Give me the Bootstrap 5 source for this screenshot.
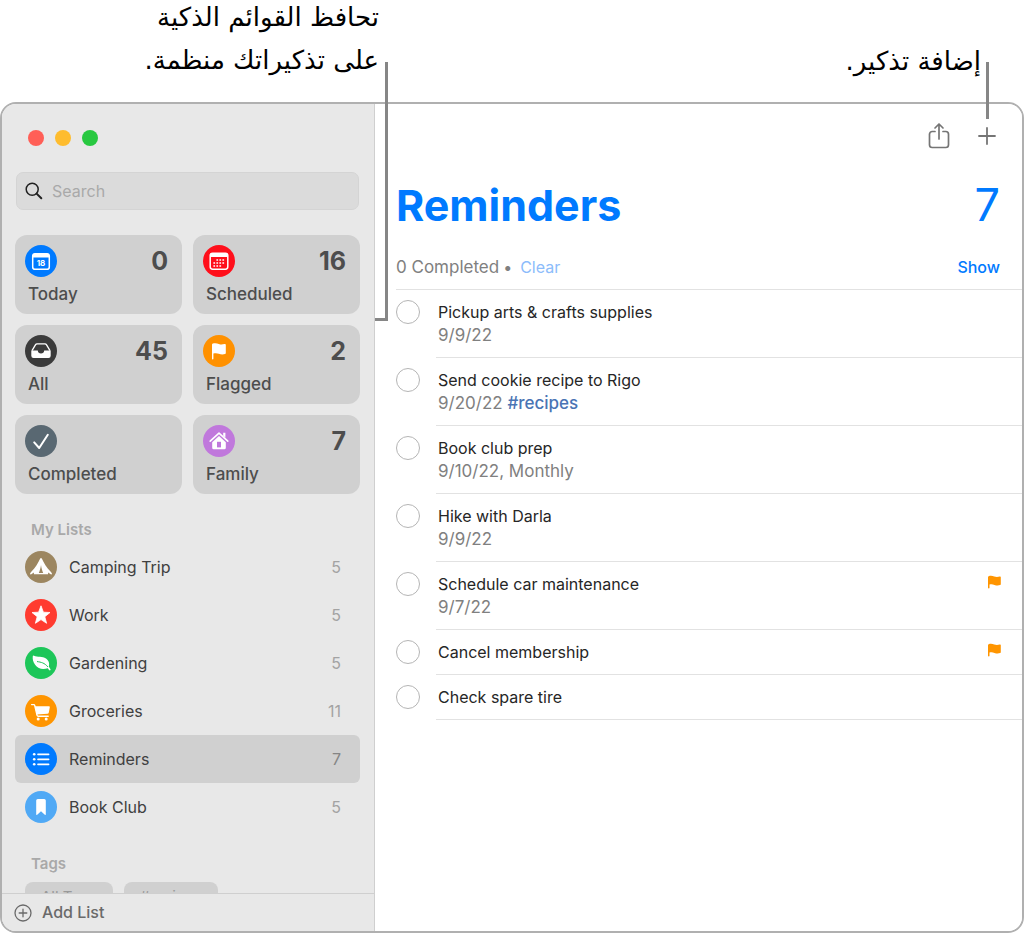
<!DOCTYPE html>
<html lang="en">
<head>
<meta charset="utf-8">
<meta name="viewport" content="width=device-width, initial-scale=1">
<title>Reminders</title>
<link href="https://cdn.jsdelivr.net/npm/bootstrap@5.3.0/dist/css/bootstrap.min.css" rel="stylesheet">
<style>
  body { font-family: Inter, "Liberation Sans", sans-serif; font-size: 16px; line-height: 23px; color: #262626; background: #fff; }
  a { text-decoration: none; }
  .callouts { height: 102px; z-index: 2; padding-right: 46px; font-family: "DejaVu Sans", sans-serif; font-size: 26px; line-height: 43px; color: #000; }
  .callout-note { width: 379px; }
  .callout-note > div { margin-top: -4px; }
  .callout-line { position: absolute; left: 100%; top: 62px; margin-left: 5px; width: 3px; height: 57px; background: #868686; }
  .callout-bracket { height: 259px; width: 13px; margin-left: -4px; background: none; border: solid #868686; border-width: 0 3px 3px 0; }

  .app-window { border: 2px solid #b0b0b0; border-radius: 16px; margin: 0 3px 1px 0; min-height: 0; }
  .sidebar { width: 373px; background: #e8e8e8; border-right: 1px solid #cfcfcf; padding: 0 14px 0 13px; }
  .traffic { padding: 26px 0 0 13px; gap: 11px; }
  .light { width: 16px; height: 16px; border-radius: 50%; border: 0; padding: 0; }
  .search-box { margin-top: 26px; margin-left: 1px; margin-right: 1px; height: 38px; border-radius: 7px; background: #dbdbdb; border: 1px solid #d4d4d4; padding: 0 8px; gap: 9px; }
  .search-box input { background: transparent; border: 0; outline: 0; padding: 0; color: #333; }
  .search-box input::placeholder { color: #a9a9a9; opacity: 1; }
  .tiles { display: grid; grid-template-columns: 1fr 1fr; gap: 11px; margin-top: 25px; }
  .tile { height: 79px; border: 0; border-radius: 12px; background: #d0d0d0; padding: 10px 14px 8px 10px; color: #4d4d4d; text-align: left; }
  .tile-label { font-size: 17px; font-weight: 500; padding-left: 3px; }
  .tile-count { font-size: 25px; font-weight: 700; line-height: 32px; }
  .disc { width: 32px; height: 32px; flex: none; display: block; }
  .group-title { font-size: 15px; line-height: 23px; font-weight: 600; color: #a9a9a9; margin: 0; padding-left: 16px; }
  .list-link { height: 48px; padding: 0 19px 0 10px; gap: 12px; border-radius: 6px; color: #404040; }
  .list-link .amount { color: #a3a3a3; }
  .list-link.current { background: #d0d0d0; }
  .list-link.current .amount { color: #858585; }
  .chip { border: 0; border-radius: 8px; background: #d0d0d0; color: #999; height: 30px; padding: 0 16px; font-size: 15px; line-height: 30px; }
  .side-foot { margin: 0 -14px 0 -13px; border-top: 1px solid #cfcfcf; height: 38px; background: #e8e8e8; }
  .add-list { border: 0; background: transparent; color: #6a6a6a; font-weight: 500; gap: 10px; padding: 0 12px; }

  .pane { background: #fff; padding-left: 21px; }
  .toolbar { height: 64px; padding-right: 26px; gap: 28px; }
  .tool { border: 0; background: transparent; padding: 0; line-height: 0; }
  .pane-title { font-size: 43px; line-height: 52px; font-weight: 700; color: #007aff; margin: 0; }
  .pane-total { font-size: 45px; line-height: 52px; color: #007aff; }
  .pane-head { padding: 11px 22px 0 0; }
  .status { padding: 25px 22px 10px 0; border-bottom: 1px solid #e2e2e2; color: #808080; }
  .done-count { font-size: 17px; }
  .clear-link { color: #8cbcfb; }
  .show-link { color: #007aff; font-weight: 500; }
  .todo { gap: 16px; }
  .todo .form-check-input { width: 24px; height: 24px; margin: 10px 0 0 0; border: 1px solid #b5b5b5; border-radius: 50%; flex: none; background-color: #fff; }
  .todo-body { border-bottom: 1px solid #e2e2e2; padding: 11px 21px 10px 2px; }
  .todo-when { font-size: 17px; color: #808080; }
  .tag-link { color: #4a74b4; font-weight: 500; }
</style>
</head>
<body>
<div class="d-flex flex-column vh-100">
  <header class="callouts position-relative d-flex justify-content-between flex-shrink-0" lang="ar">
    <div class="callout-note position-relative">
      <div dir="rtl">تحافظ القوائم الذكية<br>على تذكيراتك منظمة.</div>
      <span class="callout-line callout-bracket"></span>
    </div>
    <div class="position-relative align-self-start pt-4">
      <div dir="rtl" class="pt-3">إضافة تذكير.</div>
      <span class="callout-line"></span>
    </div>
  </header>

  <div class="app-window d-flex flex-grow-1 overflow-hidden">
    <aside class="sidebar d-flex flex-column flex-shrink-0">
      <div class="traffic d-flex">
        <button class="light" style="background:#ff5f57" aria-label="Close"></button>
        <button class="light" style="background:#febc2e" aria-label="Minimize"></button>
        <button class="light" style="background:#28c840" aria-label="Zoom"></button>
      </div>
      <label class="search-box d-flex align-items-center flex-shrink-0">
        <svg width="18" height="18" viewBox="0 0 18 18" fill="none" stroke="#222" stroke-width="1.5"><circle cx="7.200" cy="7.200" r="6"/><path d="M11.600 11.600l4.700 4.700" stroke-width="2" stroke-linecap="round"/></svg>
        <input type="text" class="flex-grow-1" placeholder="Search" aria-label="Search">
      </label>

      <div class="flex-grow-1 overflow-hidden" style="min-height:0">
        <div class="tiles">
          <button class="tile d-flex flex-column justify-content-between">
            <span class="d-flex justify-content-between w-100">
              <svg class="disc" viewBox="0 0 32 32"><circle cx="16" cy="16" r="16" fill="#007aff"/><rect x="7.7" y="8.7" width="16.6" height="15.6" rx="2.4" fill="none" stroke="#fff" stroke-width="1.5"/><path d="M7.7 12.6V10.6a2 2 0 0 1 2-2h12.6a2 2 0 0 1 2 2v2z" fill="#fff"/><text x="16" y="20.6" font-size="8" font-weight="700" fill="#fff" text-anchor="middle">18</text></svg>
              <span class="tile-count">0</span></span>
            <span class="tile-label">Today</span>
          </button>
          <button class="tile d-flex flex-column justify-content-between">
            <span class="d-flex justify-content-between w-100">
              <svg class="disc" viewBox="0 0 32 32"><circle cx="16" cy="16" r="16" fill="#ff0f1b"/><rect x="7.2" y="8.2" width="17.6" height="16" rx="2.4" fill="none" stroke="#fff" stroke-width="1.5"/><path d="M7.2 12V10.2a2 2 0 0 1 2-2h13.6a2 2 0 0 1 2 2V12z" fill="#fff"/><path d="M13.4 15h9M10.4 18h12M10.4 21h9" stroke="#fff" stroke-width="1.7" stroke-dasharray="1.7 1.3" fill="none"/></svg>
              <span class="tile-count">16</span></span>
            <span class="tile-label">Scheduled</span>
          </button>
          <button class="tile d-flex flex-column justify-content-between">
            <span class="d-flex justify-content-between w-100">
              <svg class="disc" viewBox="0 0 32 32"><circle cx="16" cy="16" r="16" fill="#3b3b3b"/><path d="M7 15.6L10.6 9.6a1.6 1.6 0 0 1 1.4-.8h8a1.6 1.6 0 0 1 1.4.8L25 15.6" fill="none" stroke="#fff" stroke-width="1.3"/><path d="M6.3 15.4h6.5c0 2 1.4 3 3.2 3s3.2-1 3.2-3h6.5v5.400a2.200 2.200 0 0 1-2.200 2.200h-15a2.200 2.200 0 0 1-2.200-2.200z" fill="#fff"/></svg>
              <span class="tile-count">45</span></span>
            <span class="tile-label">All</span>
          </button>
          <button class="tile d-flex flex-column justify-content-between">
            <span class="d-flex justify-content-between w-100">
              <svg class="disc" viewBox="0 0 32 32"><circle cx="16" cy="16" r="16" fill="#ff9100"/><path d="M9 9.700q0-.8.8-1.100c2.200-.8 4.200-.4 6 .3 2 .8 3.800.6 5.600.1q1.400-.3 1.400.8v8.200q0 .8-.8 1.100c-2.200.8-4.400.4-6.200-.3-1.800-.7-3.600-.7-5.400-.2v5.200q0 .7-.7.700t-.7-.7z" fill="#fff"/></svg>
              <span class="tile-count">2</span></span>
            <span class="tile-label">Flagged</span>
          </button>
          <button class="tile d-flex flex-column justify-content-between">
            <span class="d-flex justify-content-between w-100">
              <svg class="disc" viewBox="0 0 32 32"><circle cx="16" cy="16" r="16" fill="#596872"/><path d="M9.200 17.400l5 5.600L22.800 9.800" fill="none" stroke="#fff" stroke-width="2" stroke-linecap="round" stroke-linejoin="round"/></svg>
              <span class="tile-count"></span></span>
            <span class="tile-label">Completed</span>
          </button>
          <button class="tile d-flex flex-column justify-content-between">
            <span class="d-flex justify-content-between w-100">
              <svg class="disc" viewBox="0 0 32 32"><circle cx="16" cy="16" r="16" fill="#c078dc"/><path d="M7.200 16.200L16 8.200l8.800 8" fill="none" stroke="#fff" stroke-width="1.600" stroke-linecap="round" stroke-linejoin="round"/><path d="M20.200 7.800h2.200v5l-2.200-2z" fill="#fff"/><path d="M9.200 17.200L16 11l6.800 6.200v5.500a1.500 1.500 0 0 1-1.500 1.500H10.700a1.500 1.500 0 0 1-1.500-1.500z" fill="#fff"/><path d="M14 16.800h4v5.600h-4z" fill="#c078dc"/></svg>
              <span class="tile-count">7</span></span>
            <span class="tile-label">Family</span>
          </button>
        </div>

        <h2 class="group-title mt-4">My Lists</h2>
        <nav class="d-flex flex-column" style="margin-top:2px">
          <a href="#" class="list-link d-flex align-items-center">
            <svg class="disc" viewBox="0 0 32 32"><circle cx="16" cy="16" r="16" fill="#9c8660"/><path d="M15.200 7.600q.8-1.100 1.600 0c2 4.200 4.800 9.200 8.700 13l1.400 1.600q.2 1.200-.8 1.200l-3-1.800v1.600H8.900v-1.600l-3 1.800q-1 0-.8-1.200l1.400-1.600c3.900-3.800 6.700-8.800 8.700-13z" fill="#fff"/><path d="M16 14c-.4 3-1.200 5.600-2.200 8h4.400c-1-2.400-1.800-5-2.200-8z" fill="#9c8660"/></svg>
            <span class="flex-grow-1">Camping Trip</span><span class="amount">5</span></a>
          <a href="#" class="list-link d-flex align-items-center">
            <svg class="disc" viewBox="0 0 32 32"><circle cx="16" cy="16" r="16" fill="#ff3b30"/><path d="M16 6.800l2.400 6.400 6.600.3-5.200 4.200 1.800 6.600L16 20.600l-5.600 3.700 1.800-6.600L7 13.500l6.600-.3z" fill="#fff" stroke="#fff" stroke-width=".8" stroke-linejoin="round"/></svg>
            <span class="flex-grow-1">Work</span><span class="amount">5</span></a>
          <a href="#" class="list-link d-flex align-items-center">
            <svg class="disc" viewBox="0 0 32 32"><circle cx="16" cy="16" r="16" fill="#1dc659"/><path d="M7.800 9q.3-.8 1.200-.2c3.400 1.800 8.400.2 12 2.800 3.300 2.400 3.600 5.600 2.800 8l1.700 2.600q.4 1.100-.6 1.300-.6 0-2.200-2.200c-4.600 1.600-9.600.8-12.400-3.200C8 15 7.400 12 7.800 9z" fill="#fff"/><path d="M12.400 14.600c3.600.6 7.200 1.200 10.200 5" fill="none" stroke="#1dc659" stroke-width="1" stroke-linecap="round"/></svg>
            <span class="flex-grow-1">Gardening</span><span class="amount">5</span></a>
          <a href="#" class="list-link d-flex align-items-center">
            <svg class="disc" viewBox="0 0 32 32"><circle cx="16" cy="16" r="16" fill="#ff9500"/><path d="M6.600 9.600h2.200q.7 0 .9.800l2.300 9.700q.3 1.200 1.400 1.200h9.800" fill="none" stroke="#fff" stroke-width="1.400" stroke-linecap="round" stroke-linejoin="round"/><path d="M9.800 11.200h14.200q1 0 .8 1l-1 5.200q-.2 1.200-1.400 1.300l-10.600.8z" fill="#fff"/><circle cx="13.200" cy="24" r="1.500" fill="#fff"/><circle cx="21.200" cy="24" r="1.500" fill="#fff"/></svg>
            <span class="flex-grow-1">Groceries</span><span class="amount">11</span></a>
          <a href="#" class="list-link current d-flex align-items-center" aria-current="page">
            <svg class="disc" viewBox="0 0 32 32"><circle cx="16" cy="16" r="16" fill="#007aff"/><g fill="#fff"><circle cx="9.200" cy="11.300" r="1.300"/><circle cx="9.200" cy="16.300" r="1.300"/><circle cx="9.200" cy="21.300" r="1.300"/></g><path d="M13 11.300h10.600M13 16.300h10.600M13 21.300h10.600" stroke="#fff" stroke-width="1.700" stroke-linecap="round"/></svg>
            <span class="flex-grow-1">Reminders</span><span class="amount">7</span></a>
          <a href="#" class="list-link d-flex align-items-center">
            <svg class="disc" viewBox="0 0 32 32"><circle cx="16" cy="16" r="16" fill="#50a9f5"/><path d="M11.200 9.600q0-1.600 1.600-1.600h6.400q1.600 0 1.600 1.600v13.600q0 1.200-1 .6L16 20.200l-3.800 3.600q-1 .6-1-.6z" fill="#fff"/></svg>
            <span class="flex-grow-1">Book Club</span><span class="amount">5</span></a>
        </nav>

        <h2 class="group-title" style="margin-top:21px">Tags</h2>
        <div class="d-flex" style="gap:11px; padding:7px 10px 0">
          <button class="chip">All Tags</button>
          <button class="chip">#recipes</button>
        </div>
      </div>

      <div class="side-foot d-flex flex-shrink-0">
        <button class="add-list d-flex align-items-center">
          <svg width="18" height="18" viewBox="0 0 18 18" fill="none" stroke="#6a6a6a" stroke-width="1.300" stroke-linecap="round"><circle cx="9" cy="9" r="8"/><path d="M9 5.200v7.600M5.200 9h7.600"/></svg>
          Add List</button>
      </div>
    </aside>

    <main class="pane flex-grow-1">
      <div class="toolbar d-flex justify-content-end align-items-center">
        <button class="tool" aria-label="Share"><svg width="22" height="28" viewBox="0 0 22 28" fill="none" stroke="#757575" stroke-width="1.700" stroke-linecap="round" stroke-linejoin="round"><path d="M7 9.500H4.200A2.700 2.700 0 0 0 1.500 12.200v10.600a2.700 2.700 0 0 0 2.700 2.700h13.600a2.700 2.700 0 0 0 2.700-2.700V12.200a2.700 2.700 0 0 0-2.700-2.700H15M11 17V2.200M7 6l4-4 4 4"/></svg></button>
        <button class="tool" aria-label="Add reminder"><svg width="18" height="18" viewBox="0 0 18 18" stroke="#757575" stroke-width="1.800" stroke-linecap="round"><path d="M9 1v16M1 9h16"/></svg></button>
      </div>
      <div class="pane-head d-flex justify-content-between">
        <h1 class="pane-title">Reminders</h1>
        <span class="pane-total">7</span>
      </div>
      <div class="status d-flex">
        <span class="done-count">0 Completed</span><span class="ps-1 pe-2">•</span><a href="#" class="clear-link">Clear</a>
        <a href="#" class="show-link ms-auto">Show</a>
      </div>

      <div class="todo d-flex"><input class="form-check-input" type="checkbox" id="t1">
        <div class="todo-body flex-grow-1"><label class="d-block" for="t1">Pickup arts &amp; crafts supplies</label><div class="todo-when">9/9/22</div></div></div>
      <div class="todo d-flex"><input class="form-check-input" type="checkbox" id="t2">
        <div class="todo-body flex-grow-1"><label class="d-block" for="t2">Send cookie recipe to Rigo</label><div class="todo-when">9/20/22 <a href="#" class="tag-link">#recipes</a></div></div></div>
      <div class="todo d-flex"><input class="form-check-input" type="checkbox" id="t3">
        <div class="todo-body flex-grow-1"><label class="d-block" for="t3">Book club prep</label><div class="todo-when">9/10/22, Monthly</div></div></div>
      <div class="todo d-flex"><input class="form-check-input" type="checkbox" id="t4">
        <div class="todo-body flex-grow-1"><label class="d-block" for="t4">Hike with Darla</label><div class="todo-when">9/9/22</div></div></div>
      <div class="todo d-flex"><input class="form-check-input" type="checkbox" id="t5">
        <div class="todo-body flex-grow-1 d-flex justify-content-between"><div><label class="d-block" for="t5">Schedule car maintenance</label><div class="todo-when">9/7/22</div></div>
          <svg width="13" height="20" viewBox="0 0 13 20" fill="#ff9500"><path d="M0 4.200q0-.6.600-.9c2-.8 3.800-.4 5.600.2 2 .7 3.800.5 5.600.100q1-.2 1 .6v7q0 .7-.7.900c-2 .6-3.800.4-5.600-.2-1.800-.6-3.400-.7-5-.300v3.200q0 .6-.7.600T0 14.800z"/></svg></div></div>
      <div class="todo d-flex"><input class="form-check-input" type="checkbox" id="t6">
        <div class="todo-body flex-grow-1 d-flex justify-content-between"><label for="t6">Cancel membership</label>
          <svg width="13" height="20" viewBox="0 0 13 20" fill="#ff9500"><path d="M0 4.200q0-.6.600-.9c2-.8 3.800-.4 5.600.2 2 .7 3.800.5 5.600.100q1-.2 1 .6v7q0 .7-.7.900c-2 .6-3.800.4-5.600-.2-1.800-.6-3.400-.7-5-.300v3.200q0 .6-.7.600T0 14.800z"/></svg></div></div>
      <div class="todo d-flex"><input class="form-check-input" type="checkbox" id="t7">
        <div class="todo-body flex-grow-1"><label class="d-block" for="t7">Check spare tire</label></div></div>
    </main>
  </div>
</div>
<script src="https://cdn.jsdelivr.net/npm/bootstrap@5.3.0/dist/js/bootstrap.bundle.min.js"></script>
</body>
</html>
